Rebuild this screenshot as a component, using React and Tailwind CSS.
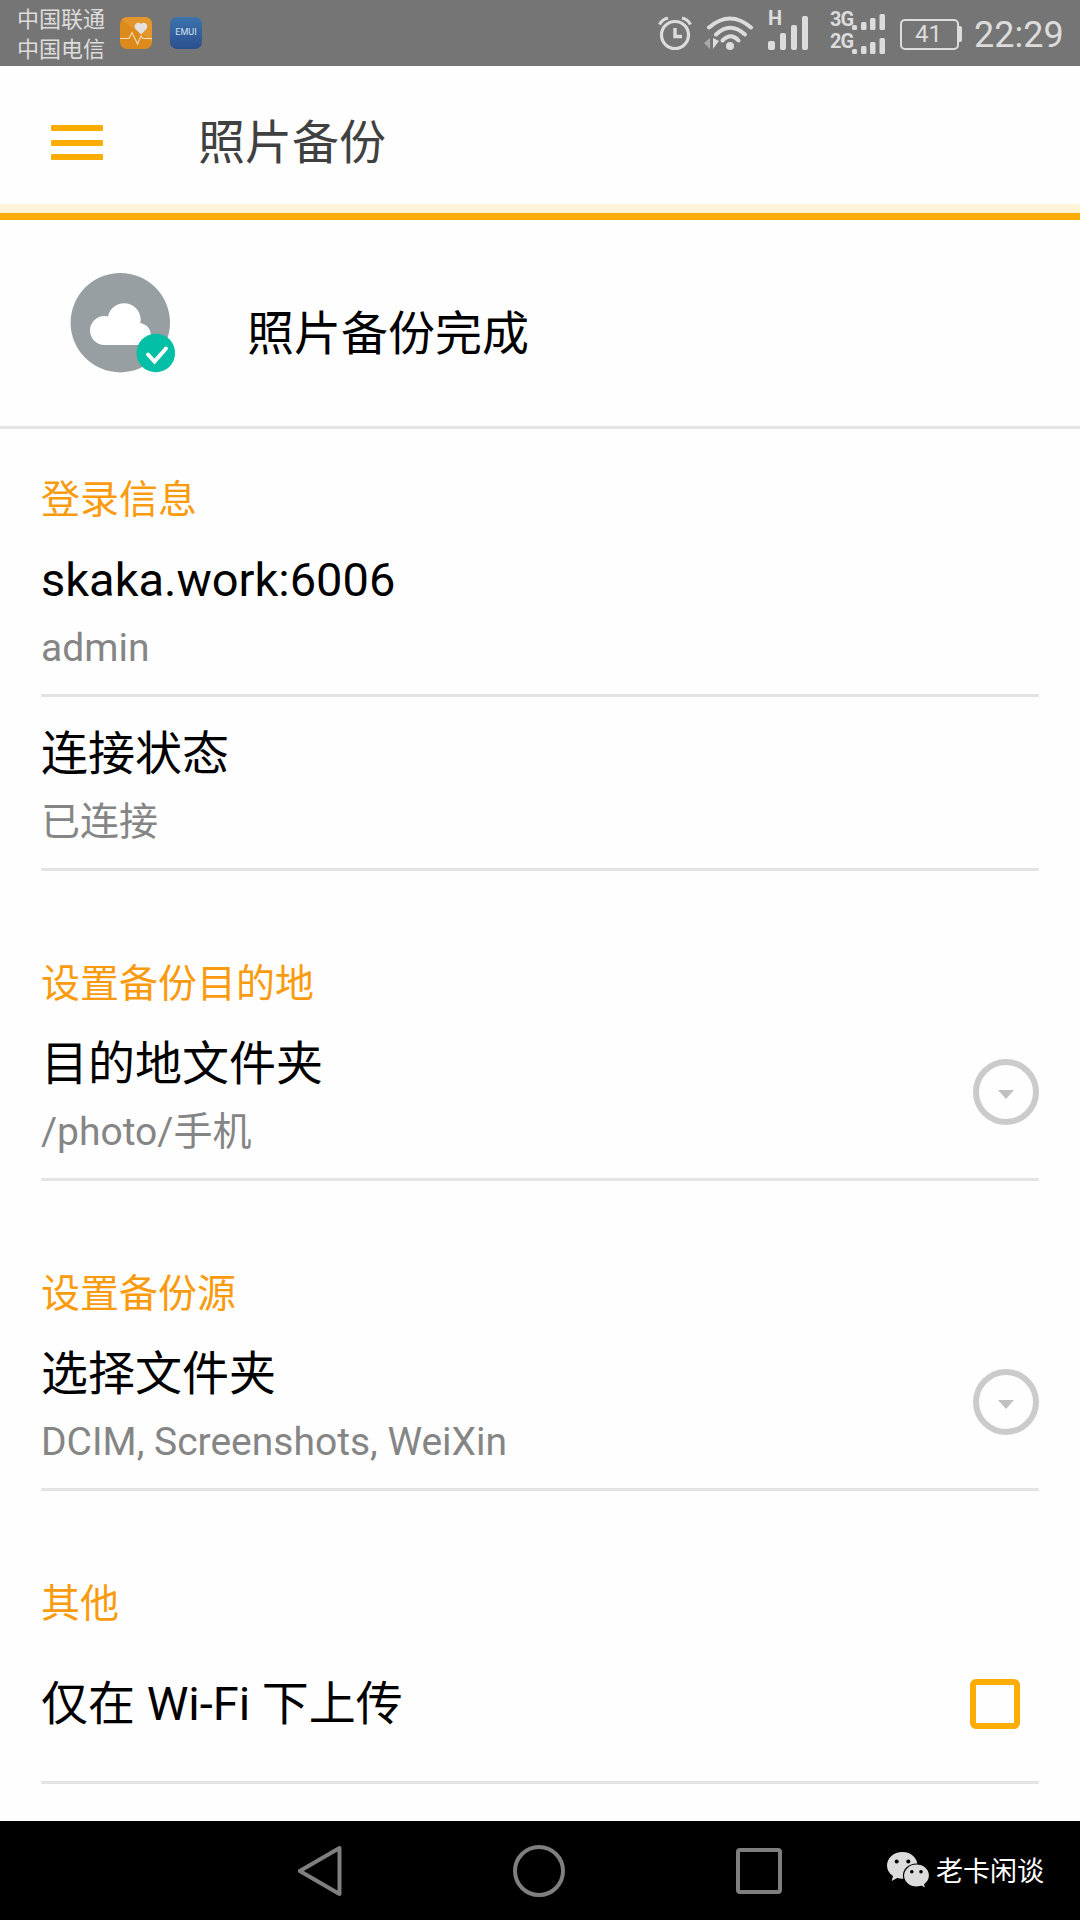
import { useState } from "react";

const StatusBar = () => (
  <div className="flex h-[66px] items-center bg-[#757575] text-[#dcdcdc]">
    <div className="ml-[17px] w-[90px] pt-[3px] text-[22px] leading-[30px]">
      <div>中国联通</div>
      <div>中国电信</div>
    </div>
    <svg className="ml-[13px] h-8 w-8" viewBox="0 0 32 32">
      <rect width="32" height="32" rx="7" fill="#dc8a1c" />
      <path d="M7 0h18a7 7 0 0 1 7 7v18L2 3a7 7 0 0 1 5-3z" fill="#e2962c" />
      <path
        d="M21 17.500l-5.200-5.200c-3.600-4.300 2.200-9 5.200-5.200 3-3.800 8.800.9 5.200 5.200z"
        fill="#e3e0e0"
      />
      <path
        d="M0 21.500h9l3-6 5.500 11.500 3.500-8 2 2.500h9"
        fill="none"
        stroke="#f0d9b4"
        strokeWidth="1.200"
      />
    </svg>
    <div className="ml-[18px] flex h-8 w-8 items-center justify-center rounded-[7px] bg-linear-to-b from-[#3c74ad] to-[#2c4f8e] text-[9px] text-[#d5e2ee]">
      EMUI
    </div>

    <svg className="ml-[456px] h-9 w-[34px]" viewBox="0 0 34 36" fill="none" stroke="currentColor">
      <circle cx="17" cy="20" r="13.500" strokeWidth="3.200" />
      <path d="M17 13v8.500h7" strokeWidth="3.500" />
      <path d="M1.500 9.500Q4 4.500 10 3M32.500 9.500Q30 4.500 24 3" strokeWidth="3.200" />
    </svg>
    <svg className="ml-3 h-9 w-[50px]" viewBox="0 0 50 36" fill="none" stroke="currentColor">
      <path d="M5 12.500Q26-5.500 47 12.500" strokeWidth="4" strokeLinecap="round" />
      <path d="M12 19.500Q26 6 41 19.500" strokeWidth="4" strokeLinecap="round" />
      <path d="M18.500 25.500Q27 17 34.500 25.500" strokeWidth="4" strokeLinecap="round" />
      <circle cx="26" cy="31" r="4" fill="currentColor" stroke="none" />
      <path d="M0 28l6-5v11z" fill="#a9a9a9" stroke="none" />
      <path d="M9 23v11l6-8z" fill="currentColor" stroke="none" />
    </svg>
    <div className="ml-[14px] h-[66px] w-10">
      <div className="h-[33px] pt-[7px] text-[20px] leading-[22px] font-bold">H</div>
      <svg className="-mt-[17px] h-[35px] w-10" viewBox="0 0 40 35" fill="currentColor">
        <rect x="0" y="25" width="7" height="9" rx="2" />
        <rect x="12" y="17" width="6" height="17" rx="2" />
        <rect x="23" y="9" width="6" height="25" rx="2" />
        <rect x="34" y="0" width="6" height="34" rx="2" />
      </svg>
    </div>
    <div className="mb-[7px] ml-[22px] flex w-[22px] flex-col text-[20px] leading-[22px] font-bold tracking-[-1px]">
      <span>3G</span>
      <span>2G</span>
    </div>
    <svg className="mt-[2px] h-[42px] w-[34px]" viewBox="0 0 34 42" fill="currentColor">
      <rect x="0" y="12" width="5" height="5" rx="1.500" />
      <rect x="9" y="9" width="5.500" height="8" rx="1.500" />
      <rect x="18" y="5" width="5.500" height="12" rx="1.500" />
      <rect x="27.500" y="1" width="5.500" height="16" rx="1.500" />
      <rect x="0" y="36" width="5" height="5" rx="1.500" />
      <rect x="9" y="33" width="5.500" height="8" rx="1.500" />
      <rect x="18" y="29" width="5.500" height="12" rx="1.500" />
      <rect x="27.500" y="25" width="5.500" height="16" rx="1.500" />
    </svg>
    <div className="ml-[14px] flex items-center pt-[2px]">
      <div className="flex h-[31px] w-[59px] items-center justify-center rounded-[5px] border-[2.500px] border-current pr-[2px] text-[24px]">
        41
      </div>
      <div className="h-4 w-[3px] rounded-r-[2px] bg-current" />
    </div>
    <div className="ml-[12px] pt-[3px] text-[36px] leading-[42px]">22:29</div>
  </div>
);

const Header = () => (
  <div className="flex h-[154px] items-start border-b-[7px] border-[#fcad03]">
    <div className="flex h-[147px] w-full items-start border-b-[9px] border-[#fff4d8]">
      <button className="mt-[59px] ml-[51px] flex flex-col gap-[8.500px]">
        <span className="h-[6px] w-[52px] rounded-[1px] bg-[#fcad03]" />
        <span className="h-[6px] w-[52px] rounded-[1px] bg-[#fcad03]" />
        <span className="h-[6px] w-[52px] rounded-[1px] bg-[#fcad03]" />
      </button>
      <h1 className="mt-[47px] ml-[95px] text-[47px] leading-[60px] text-[#404040]">
        照片备份
      </h1>
    </div>
  </div>
);

const BackupStatus = () => (
  <div className="flex h-[209px] border-b-[3px] border-[#e4e4e4]">
    <svg className="mt-[52px] ml-[70px] h-[104px] w-[107px]" viewBox="0 0 107 104">
      <circle cx="50.300" cy="50.700" r="49.700" fill="#989fa2" />
      <path
        d="M34.500 73a14.500 14.500 0 0 1 0-29q1.600 0 3.400.4A16.400 16.400 0 0 1 70.300 51c6.500 1.500 10.500 6 10.500 12v10z"
        fill="#fff"
      />
      <circle cx="85.800" cy="81" r="19.300" fill="#02bfa5" />
      <path
        d="M78 82.500l6.500 7L96 76.500"
        fill="none"
        stroke="#fff"
        strokeWidth="4"
        strokeLinecap="round"
      />
    </svg>
    <p className="mt-[84px] ml-[70px] text-[47px] leading-[60px] text-black">照片备份完成</p>
  </div>
);

const SectionTitle = ({ children, first }) => (
  <h2
    className={
      first
        ? "h-[94px] pt-[46px] text-[39px] leading-[50px] text-[#fa9b0f]"
        : "h-[136px] pt-[88px] text-[39px] leading-[50px] text-[#fa9b0f]"
    }
  >
    {children}
  </h2>
);

const Row = ({ title, detail, expandable }) => (
  <div className="flex h-[174px] items-center justify-between border-b-[3px] border-[#e4e4e4]">
    <div className="h-full">
      <div className="pt-[27px] text-[47px] leading-[60px] text-black">{title}</div>
      <div className="pt-[13px] text-[39px] leading-[50px] text-[#858585]">{detail}</div>
    </div>
    {expandable && (
      <button className="mb-[2px] flex h-[66px] w-[66px] items-center justify-center rounded-full border-[6px] border-[#cbcbcb]">
        <svg className="mt-[5px] h-[9px] w-4" viewBox="0 0 16 9">
          <path d="M0 0h16L8 9z" fill="#c0c0c0" />
        </svg>
      </button>
    )}
  </div>
);

const NavBar = () => (
  <div className="flex h-[99px] items-center bg-black">
    <svg
      className="ml-[297px] h-[52px] w-[46px]"
      viewBox="0 0 46 52"
      fill="none"
      stroke="#7f7f7f"
      strokeWidth="4"
      strokeLinejoin="round"
    >
      <path d="M42.500 3v46L2.800 26z" />
    </svg>
    <div className="ml-[170px] h-[52px] w-[52px] rounded-full border-4 border-[#7f7f7f]" />
    <div className="ml-[171px] h-[46px] w-[46px] rounded-[4px] border-4 border-[#7f7f7f]" />
    <svg className="ml-[105px] h-[38px] w-11" viewBox="0 0 44 38">
      <path
        d="M15.500 0C6.500 0 0 6 0 13.500c0 4.500 2.300 8 6 10.500l-1.300 5 5.500-3c1.800.6 3.500.8 5.500.8C24 26.800 30.500 21 30.500 13.500S24 0 15.500 0z"
        fill="#dcdcdc"
      />
      <path
        d="M29.500 12c7.500 0 13 5.200 13 11.600 0 3.700-2 6.800-4.800 8.900l1.100 4-4.600-2.300c-1.500.5-3 .8-4.700.8-7.500 0-13-5.200-13-11.400S22 12 29.500 12z"
        fill="#dcdcdc"
        stroke="#000"
        strokeWidth="1.200"
      />
      <circle cx="9.700" cy="9.500" r="2" />
      <circle cx="21.300" cy="9.500" r="2" />
      <circle cx="24.800" cy="19.800" r="1.800" />
      <circle cx="34" cy="19.800" r="1.800" />
    </svg>
    <span className="ml-[5px] pt-[2px] text-[27px] leading-[36px] text-white">老卡闲谈</span>
  </div>
);

const App = () => {
  const [wifiOnly, setWifiOnly] = useState(false);

  return (
    <div className="flex h-[1920px] w-[1080px] flex-col overflow-hidden bg-[#fefefe] font-[Roboto,'Noto_Sans_CJK_SC',sans-serif] whitespace-nowrap">
      <StatusBar />
      <Header />
      <BackupStatus />
      <div className="flex-1 px-[41px]">
        <SectionTitle first>登录信息</SectionTitle>
        <Row title="skaka.work:6006" detail="admin" />
        <Row title="连接状态" detail="已连接" />

        <SectionTitle>设置备份目的地</SectionTitle>
        <Row title="目的地文件夹" detail="/photo/手机" expandable />

        <SectionTitle>设置备份源</SectionTitle>
        <Row title="选择文件夹" detail="DCIM, Screenshots, WeiXin" expandable />

        <SectionTitle>其他</SectionTitle>
        <div className="flex h-[157px] items-center justify-between border-b-[3px] border-[#e4e4e4]">
          <span className="text-[47px] leading-[60px] text-black">仅在 Wi-Fi 下上传</span>
          <button
            onClick={() => setWifiOnly(!wifiOnly)}
            className="mr-[19px] h-[50px] w-[50px] rounded-[6px] border-[6px] border-[#fcad03]"
          >
            {wifiOnly && <span className="block h-full w-full bg-[#fcad03]" />}
          </button>
        </div>
      </div>
      <NavBar />
    </div>
  );
};

export default App;
